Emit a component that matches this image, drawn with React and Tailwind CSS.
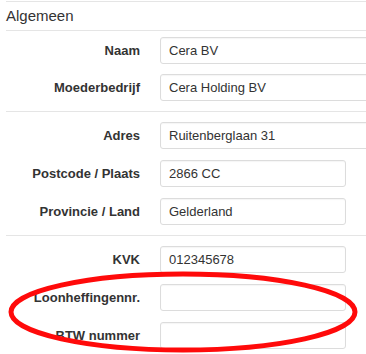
export default function App() {
  const Row = ({ label, value, wide }) => (
    <div className="flex items-center">
      <label className="w-[134px] shrink-0 text-right text-[13px] font-bold text-[#333]">{label}</label>
      <div
        className={
          "ml-[20px] h-[27px] shrink-0 rounded-[3px] border border-[#dcdcdc] bg-white px-[8px] text-[13px] leading-[25px] text-[#333] shadow-[inset_0_1px_1px_rgba(0,0,0,0.04)] " +
          (wide ? "w-[260px]" : "w-[186px]")
        }
      >
        {value}
      </div>
    </div>
  );

  return (
    <div className="relative h-[354px] w-[366px] overflow-hidden bg-white font-['Liberation_Sans',Arial,sans-serif]">
      <div className="pl-[6px]">
        <div className="mt-[1px] w-[400px] border-t border-b border-[#e5e5e5] pb-[6px] pt-[5px]">
          <h2 className="text-[15px] leading-[17px] text-[#333]">Algemeen</h2>
        </div>

        <div className="flex w-[400px] flex-col gap-[10px] border-b border-[#e5e5e5] pb-[10px] pt-[6px]">
          <Row label="Naam" value="Cera BV" wide />
          <Row label="Moederbedrijf" value="Cera Holding BV" wide />
        </div>

        <div className="flex w-[400px] flex-col gap-[11px] border-b border-[#e5e5e5] pb-[10px] pt-[10px]">
          <Row label="Adres" value="Ruitenberglaan 31" wide />
          <Row label="Postcode / Plaats" value="2866 CC" />
          <Row label="Provincie / Land" value="Gelderland" />
        </div>

        <div className="flex w-[400px] flex-col gap-[11px] pt-[10px]">
          <Row label="KVK" value="012345678" />
          <Row label="Loonheffingennr." value="" />
          <Row label="BTW nummer" value="" />
        </div>
      </div>

      {/* red annotation circle */}
      <svg className="pointer-events-none absolute left-0 top-0" width="366" height="354" viewBox="0 0 366 354">
        <ellipse cx="183" cy="312" rx="172" ry="38" fill="none" stroke="#ff0a0a" strokeWidth="5" />
      </svg>
    </div>
  );
}
